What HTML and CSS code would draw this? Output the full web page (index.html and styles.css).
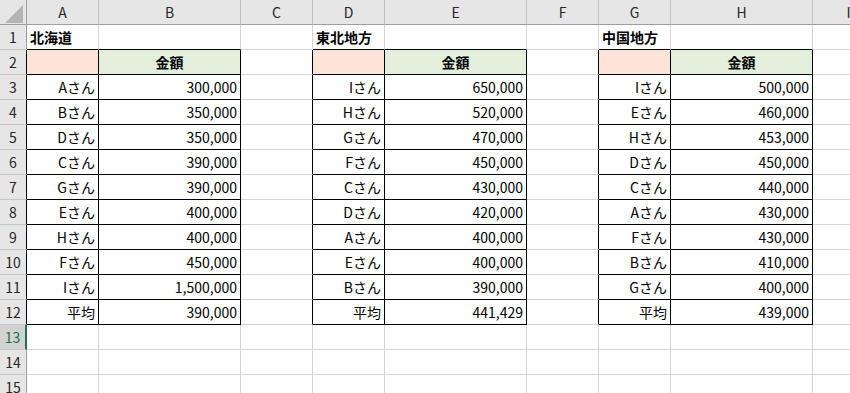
FILE: index.html
```html
<!DOCTYPE html>
<html lang="ja">
<head>
<meta charset="utf-8">
<title>Sheet</title>
<link rel="stylesheet" href="styles.css">
</head>
<body>
<div class="sheet">
  <!-- header row -->
  <div class="corner"><span class="tri"></span></div>
  <div class="h">A</div><div class="h">B</div><div class="h">C</div><div class="h">D</div><div class="h">E</div><div class="h">F</div><div class="h">G</div><div class="h">H</div><div class="h">I</div>

  <!-- row 1 -->
  <div class="r">1</div>
  <div class="c ab b">北海道</div><div class="c ab"></div><div class="c"></div>
  <div class="c ab b">東北地方</div><div class="c ab"></div><div class="c"></div>
  <div class="c ab b">中国地方</div><div class="c ab"></div><div class="c"></div>

  <!-- row 2 -->
  <div class="r lb">2</div>
  <div class="c t s"></div><div class="c t g">金額</div><div class="c lb"></div>
  <div class="c t s"></div><div class="c t g">金額</div><div class="c lb"></div>
  <div class="c t s"></div><div class="c t g">金額</div><div class="c"></div>

  <!-- row 3 -->
  <div class="r lb">3</div>
  <div class="c t">Aさん</div><div class="c t">300,000</div><div class="c lb"></div>
  <div class="c t">Iさん</div><div class="c t">650,000</div><div class="c lb"></div>
  <div class="c t">Iさん</div><div class="c t">500,000</div><div class="c"></div>

  <!-- row 4 -->
  <div class="r lb">4</div>
  <div class="c t">Bさん</div><div class="c t">350,000</div><div class="c lb"></div>
  <div class="c t">Hさん</div><div class="c t">520,000</div><div class="c lb"></div>
  <div class="c t">Eさん</div><div class="c t">460,000</div><div class="c"></div>

  <!-- row 5 -->
  <div class="r lb">5</div>
  <div class="c t">Dさん</div><div class="c t">350,000</div><div class="c lb"></div>
  <div class="c t">Gさん</div><div class="c t">470,000</div><div class="c lb"></div>
  <div class="c t">Hさん</div><div class="c t">453,000</div><div class="c"></div>

  <!-- row 6 -->
  <div class="r lb">6</div>
  <div class="c t">Cさん</div><div class="c t">390,000</div><div class="c lb"></div>
  <div class="c t">Fさん</div><div class="c t">450,000</div><div class="c lb"></div>
  <div class="c t">Dさん</div><div class="c t">450,000</div><div class="c"></div>

  <!-- row 7 -->
  <div class="r lb">7</div>
  <div class="c t">Gさん</div><div class="c t">390,000</div><div class="c lb"></div>
  <div class="c t">Cさん</div><div class="c t">430,000</div><div class="c lb"></div>
  <div class="c t">Cさん</div><div class="c t">440,000</div><div class="c"></div>

  <!-- row 8 -->
  <div class="r lb">8</div>
  <div class="c t">Eさん</div><div class="c t">400,000</div><div class="c lb"></div>
  <div class="c t">Dさん</div><div class="c t">420,000</div><div class="c lb"></div>
  <div class="c t">Aさん</div><div class="c t">430,000</div><div class="c"></div>

  <!-- row 9 -->
  <div class="r lb">9</div>
  <div class="c t">Hさん</div><div class="c t">400,000</div><div class="c lb"></div>
  <div class="c t">Aさん</div><div class="c t">400,000</div><div class="c lb"></div>
  <div class="c t">Fさん</div><div class="c t">430,000</div><div class="c"></div>

  <!-- row 10 -->
  <div class="r lb">10</div>
  <div class="c t">Fさん</div><div class="c t">450,000</div><div class="c lb"></div>
  <div class="c t">Eさん</div><div class="c t">400,000</div><div class="c lb"></div>
  <div class="c t">Bさん</div><div class="c t">410,000</div><div class="c"></div>

  <!-- row 11 -->
  <div class="r lb">11</div>
  <div class="c t">Iさん</div><div class="c t">1,500,000</div><div class="c lb"></div>
  <div class="c t">Bさん</div><div class="c t">390,000</div><div class="c lb"></div>
  <div class="c t">Gさん</div><div class="c t">400,000</div><div class="c"></div>

  <!-- row 12 -->
  <div class="r lb">12</div>
  <div class="c t">平均</div><div class="c t">390,000</div><div class="c lb"></div>
  <div class="c t">平均</div><div class="c t">441,429</div><div class="c lb"></div>
  <div class="c t">平均</div><div class="c t">439,000</div><div class="c"></div>

  <!-- row 13 -->
  <div class="r sel">13</div>
  <div class="c"></div><div class="c"></div><div class="c"></div><div class="c"></div><div class="c"></div><div class="c"></div><div class="c"></div><div class="c"></div><div class="c"></div>

  <!-- row 14 -->
  <div class="r">14</div>
  <div class="c"></div><div class="c"></div><div class="c"></div><div class="c"></div><div class="c"></div><div class="c"></div><div class="c"></div><div class="c"></div><div class="c"></div>

  <!-- row 15 -->
  <div class="r">15</div>
  <div class="c"></div><div class="c"></div><div class="c"></div><div class="c"></div><div class="c"></div><div class="c"></div><div class="c"></div><div class="c"></div><div class="c"></div>
</div>
</body>
</html>
```

FILE: styles.css
```css
html, body {
  margin: 0;
  padding: 0;
  background: #fff;
  overflow: hidden;
}

.sheet {
  display: grid;
  grid-template-columns: 27px 72px 142px 72px 72px 142px 72px 72px 142px 72px;
  grid-auto-rows: 25px;
  width: 885px;
  font-family: "Noto Sans CJK JP", "Noto Sans", sans-serif;
  font-size: 14px;
  line-height: 24px;
  color: #000;
}

.sheet > div {
  box-sizing: border-box;
  white-space: nowrap;
  overflow: hidden;
}

.corner {
  background: #e6e6e6;
  border-right: 1px solid #9e9e9e;
  border-bottom: 1px solid #9e9e9e;
  position: relative;
}

.tri {
  position: absolute;
  left: 5px;
  top: 5px;
  width: 18px;
  height: 18px;
  background: #b4b4b4;
  clip-path: polygon(100% 0, 100% 100%, 0 100%);
}

.h {
  background: #e6e6e6;
  border-right: 1px solid #bdbdbd;
  border-bottom: 1px solid #9e9e9e;
  text-align: center;
  color: #262626;
}

.r {
  background: #e6e6e6;
  border-right: 1px solid #9e9e9e;
  border-bottom: 1px solid #c6c6c6;
  text-align: center;
  color: #262626;
}

.r.sel {
  background: #d2d2d2;
  color: #217346;
  border-right: 2px solid #217346;
}

.c {
  border-right: 1px solid #d4d4d4;
  border-bottom: 1px solid #d4d4d4;
  padding: 0 3px;
}

.c.t {
  border-right-color: #000;
  border-bottom-color: #000;
  text-align: right;
}

.lb {
  border-right-color: #000 !important;
}

.ab {
  border-bottom-color: #000;
}

.b {
  font-weight: 700;
}

.s {
  background: #fce4d6;
}

.c.g {
  background: #e2efda;
  text-align: center;
  font-weight: 700;
}
```
